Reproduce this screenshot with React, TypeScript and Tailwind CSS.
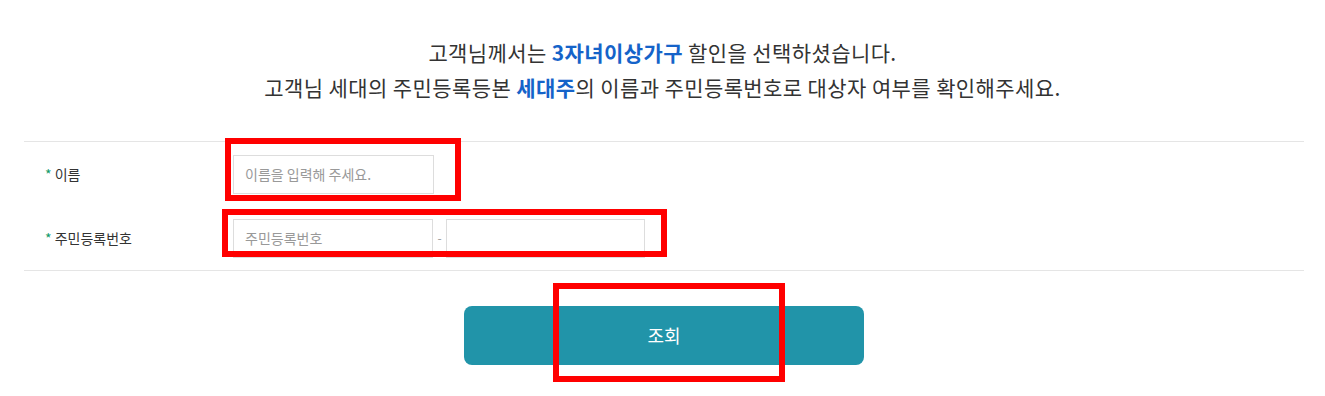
import React from 'react';

const font = { fontFamily: '"Noto Sans CJK KR", "Noto Sans", sans-serif' };
const inputCls = 'h-[39px] border border-[#dddddd] px-[11px] text-[14px] text-[#333] placeholder:text-[#999] outline-none bg-white';

export default function App() {
  return (
    <div className="relative w-[1325px] h-[396px] bg-white text-[#333]" style={font}>
      {/* 안내 문구 */}
      <div className="pt-[35px] text-center text-[21px] leading-[35px] tracking-[0.4px]">
        <p>고객님께서는 <strong className="font-bold text-[#1563c9]">3자녀이상가구</strong> 할인을 선택하셨습니다.</p>
        <p>고객님 세대의 주민등록등본 <strong className="font-bold text-[#1563c9]">세대주</strong>의 이름과 주민등록번호로 대상자 여부를 확인해주세요.</p>
      </div>

      {/* 입력 폼 */}
      <div className="ml-[24px] mt-[36px] w-[1280px] border-y border-[#e5e5e5]">
        <div className="flex h-[64px] items-center">
          <div className="w-[209px] pl-[21px] text-[14px]">
            <span className="text-[#119a6a]">*</span> 이름
          </div>
          <input className={`${inputCls} w-[201px]`} placeholder="이름을 입력해 주세요." />
        </div>
        <div className="flex h-[64px] items-center">
          <div className="w-[209px] pl-[21px] text-[14px]">
            <span className="text-[#119a6a]">*</span> 주민등록번호
          </div>
          <input className={`${inputCls} w-[200px]`} placeholder="주민등록번호" />
          <span className="w-[13px] text-center text-[12px] text-[#999]">-</span>
          <input className={`${inputCls} w-[199px]`} type="password" />
        </div>
      </div>

      <div className="mt-[35px] flex justify-center pl-[3px]">
        <button className="h-[59px] w-[400px] rounded-[8px] bg-[#2194a9] text-[18px] text-white">조회</button>
      </div>

      {/* 표시 박스 */}
      <div className="pointer-events-none absolute left-[225px] top-[138px] h-[63px] w-[236px] border-[6px] border-[#ff0000]" />
      <div className="pointer-events-none absolute left-[222px] top-[209px] h-[48px] w-[445px] border-[6px] border-[#ff0000]" />
      <div className="pointer-events-none absolute left-[553px] top-[283px] h-[99px] w-[232px] border-[6px] border-[#ff0000]" />
    </div>
  );
}
